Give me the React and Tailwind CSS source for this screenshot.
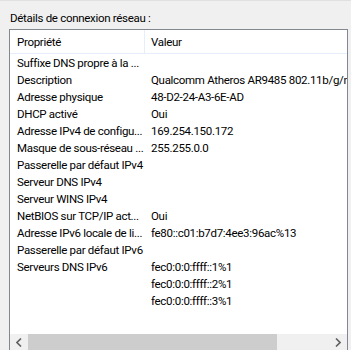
const rows = [
  ['Suffixe DNS propre à la ...', ''],
  ['Description', 'Qualcomm Atheros AR9485 802.11b/g/n'],
  ['Adresse physique', '48-D2-24-A3-6E-AD'],
  ['DHCP activé', 'Oui'],
  ['Adresse IPv4 de configu...', '169.254.150.172'],
  ['Masque de sous-réseau ...', '255.255.0.0'],
  ['Passerelle par défaut IPv4', ''],
  ['Serveur DNS IPv4', ''],
  ['Serveur WINS IPv4', ''],
  ['NetBIOS sur TCP/IP act...', 'Oui'],
  ['Adresse IPv6 locale de li...', 'fe80::c01:b7d7:4ee3:96ac%13'],
  ['Passerelle par défaut IPv6', ''],
  ['Serveurs DNS IPv6', 'fec0:0:0:ffff::1%1'],
  ['', 'fec0:0:0:ffff::2%1'],
  ['', 'fec0:0:0:ffff::3%1'],
];

const Arrow = ({ dir }) => (
  <svg width="6" height="9" viewBox="0 0 6 9">
    <path
      d={dir === 'left' ? 'M5 0.5 L1 4.5 L5 8.5' : 'M1 0.5 L5 4.5 L1 8.5'}
      fill="none"
      stroke="#606060"
      strokeWidth="1.6"
    />
  </svg>
);

export default function App() {
  return (
    <div
      className="w-[351px] h-[350px] overflow-hidden bg-[#f0f0f0] border-t border-[#e0e0e0] text-[11.5px] tracking-[-0.3px] text-black"
      style={{ fontFamily: 'Roboto, "Liberation Sans", sans-serif' }}
    >
      <div className="pl-[10px] pt-[9px] leading-[16px]">Détails de connexion réseau :</div>

      <div className="ml-[9px] mt-[3px] w-[339px] h-[323px] border border-[#828790] bg-white flex flex-col">
        {/* header */}
        <div className="flex h-[24px] shrink-0 border-b border-[#e5eefa] leading-[16px]">
          <div className="w-[135px] shrink-0 pl-[7px] flex items-center border-r border-[#e5eefa]">Propriété</div>
          <div className="pl-[6px] flex items-center">Valeur</div>
        </div>

        {/* rows */}
        <div className="flex-1 pt-[1px] overflow-hidden">
          {rows.map(([prop, val], i) => (
            <div key={i} className="flex h-[17px] leading-[17px] whitespace-nowrap">
              <div className="w-[135px] shrink-0 pl-[7px] overflow-hidden">{prop}</div>
              <div className="pl-[6px]">{val}</div>
            </div>
          ))}
        </div>

        {/* horizontal scrollbar */}
        <div className="flex h-[16px] shrink-0 mb-[1px] bg-[#f0f0f0]">
          <div className="w-[18px] flex items-center justify-center">
            <Arrow dir="left" />
          </div>
          <div className="w-[249px] bg-[#cdcdcd]" />
          <div className="flex-1" />
          <div className="w-[18px] flex items-center justify-center">
            <Arrow dir="right" />
          </div>
        </div>
      </div>
    </div>
  );
}
